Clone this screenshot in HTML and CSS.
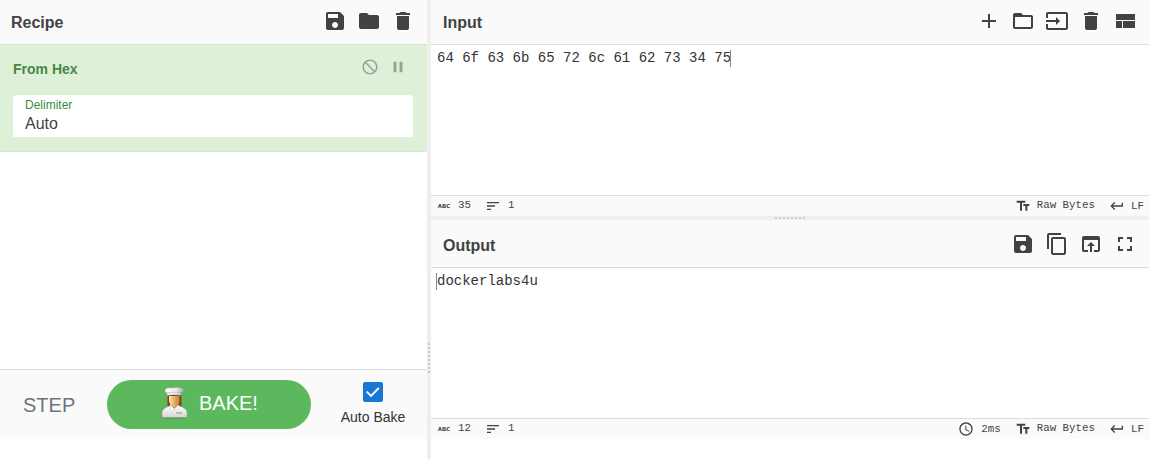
FILE: index.html
```html
<!DOCTYPE html>
<html lang="en">
<head>
<meta charset="utf-8">
<title>CyberChef</title>
<link rel="stylesheet" href="styles.css">
</head>
<body>
<svg class="defs" aria-hidden="true">
  <symbol id="save" viewBox="0 0 24 24"><path d="M17 3H5c-1.11 0-2 .9-2 2v14c0 1.1.89 2 2 2h14c1.1 0 2-.9 2-2V7l-4-4zm-5 16c-1.66 0-3-1.34-3-3s1.34-3 3-3 3 1.34 3 3-1.34 3-3 3zm3-10H5V5h10v4z"/></symbol>
  <symbol id="folder" viewBox="0 0 24 24"><path d="M10 4H4c-1.1 0-1.99.9-1.99 2L2 18c0 1.1.9 2 2 2h16c1.1 0 2-.9 2-2V8c0-1.1-.9-2-2-2h-8l-2-2z"/></symbol>
  <symbol id="folder-open" viewBox="0 0 24 24"><path d="M20 6h-8l-2-2H4c-1.1 0-1.99.9-1.99 2L2 18c0 1.1.9 2 2 2h16c1.1 0 2-.9 2-2V8c0-1.1-.9-2-2-2zm0 12H4V8h16v10z"/></symbol>
  <symbol id="delete" viewBox="0 0 24 24"><path d="M6 19c0 1.1.9 2 2 2h8c1.1 0 2-.9 2-2V7H6v12zM19 4h-3.500l-1-1h-5l-1 1H5v2h14V4z"/></symbol>
  <symbol id="add" viewBox="0 0 24 24"><path d="M19 13h-6v6h-2v-6H5v-2h6V5h2v6h6v2z"/></symbol>
  <symbol id="input" viewBox="0 0 24 24"><path d="M21 3.010H3c-1.100 0-2 .9-2 2V9h2V4.990h18v14.030H3V15H1v4.010c0 1.100.9 1.980 2 1.980h18c1.100 0 2-.88 2-1.980v-14c0-1.110-.9-2-2-2zM11 16l4-4-4-4v3H1v2h10v3z"/></symbol>
  <symbol id="layout" viewBox="0 0 24 24"><path d="M3 19h6v-7H3v7zm7 0h12v-7H10v7zM3 5v6h19V5H3z"/></symbol>
  <symbol id="copy" viewBox="0 0 24 24"><path d="M16 1H4c-1.100 0-2 .9-2 2v14h2V3h12V1zm3 4H8c-1.100 0-2 .9-2 2v14c0 1.100.9 2 2 2h11c1.100 0 2-.9 2-2V7c0-1.100-.9-2-2-2zm0 16H8V7h11v14z"/></symbol>
  <symbol id="open-browser" viewBox="0 0 24 24"><path d="M19 4H5c-1.110 0-2 .9-2 2v12c0 1.100.89 2 2 2h4v-2H5V8h14v10h-4v2h4c1.100 0 2-.9 2-2V6c0-1.100-.89-2-2-2zm-7 6l-4 4h3v6h2v-6h3l-4-4z"/></symbol>
  <symbol id="fullscreen" viewBox="0 0 24 24"><path d="M7 14H5v5h5v-2H7v-3zm-2-4h2V7h3V5H5v5zm12 7h-3v2h5v-5h-2v3zM14 5v2h3v3h2V5h-5z"/></symbol>
  <symbol id="block" viewBox="0 0 24 24"><path transform="translate(24 0) scale(-1 1)" d="M12 2C6.480 2 2 6.480 2 12s4.480 10 10 10 10-4.480 10-10S17.520 2 12 2zM4 12c0-4.420 3.580-8 8-8 1.850 0 3.550.63 4.900 1.690L5.690 16.900C4.630 15.550 4 13.850 4 12zm8 8c-1.850 0-3.550-.63-4.900-1.690L18.310 7.100C19.370 8.450 20 10.150 20 12c0 4.420-3.580 8-8 8z"/></symbol>
  <symbol id="pause" viewBox="0 0 24 24"><path d="M6 19h4V5H6v14zm8-14v14h4V5h-4z"/></symbol>
  <symbol id="sort" viewBox="0 0 24 24"><path d="M3 18h6v-2H3v2zM3 6v2h18V6H3zm0 7h12v-2H3v2z"/></symbol>
  <symbol id="text-fields" viewBox="0 0 24 24"><path d="M2.500 4v3h5v12h3V7h5V4h-13zm19 5h-9v3h3v7h3v-7h3V9z"/></symbol>
  <symbol id="return" viewBox="0 0 24 24"><path d="M19 7v4H5.830l3.580-3.590L8 6l-6 6 6 6 1.410-1.410L5.830 13H21V7z"/></symbol>
  <symbol id="clock" viewBox="0 0 24 24"><path d="M11.990 2C6.470 2 2 6.480 2 12s4.470 10 9.990 10C17.520 22 22 17.520 22 12S17.520 2 11.990 2zM12 20c-4.420 0-8-3.580-8-8s3.580-8 8-8 8 3.580 8 8-3.580 8-8 8zm.5-13H11v6l5.250 3.150.75-1.230-4.500-2.670z"/></symbol>
</svg>

<div class="workspace">
  <section class="recipe">
    <header class="title-bar">
      <h1>Recipe</h1>
      <div class="tools">
        <svg><use href="#save"/></svg><svg><use href="#folder"/></svg><svg><use href="#delete"/></svg>
      </div>
    </header>
    <div class="operation">
      <div class="op-head">
        <span class="op-title">From Hex</span>
        <div class="op-icons"><svg><use href="#block"/></svg><svg><use href="#pause"/></svg></div>
      </div>
      <div class="field">
        <span class="field-label">Delimiter</span>
        <span class="field-value">Auto</span>
      </div>
    </div>
    <div class="controls">
      <div class="step">STEP</div>
      <div class="bake">
        <svg class="chef" viewBox="0 0 32 32">
          <defs>
            <linearGradient id="skin"><stop offset="0" stop-color="#ffe6a6"/><stop offset="1" stop-color="#bd8138"/></linearGradient>
            <linearGradient id="cloth" x2="0" y2="1"><stop offset="0" stop-color="#fff"/><stop offset="1" stop-color="#d3d5d3"/></linearGradient>
            <linearGradient id="hat"><stop offset="0" stop-color="#fff"/><stop offset=".6" stop-color="#ececec"/><stop offset="1" stop-color="#aaa"/></linearGradient>
          </defs>
          <ellipse cx="16.500" cy="30.500" rx="13" ry="1" fill="#3f8e40"/>
          <path d="M9.500 8h14v10c0 3-1.500 4.500-3.500 4.500h-7C10.500 22 9.500 20 9.500 17z" fill="#854015"/>
          <path d="M4 30.500v-5c0-3 3-5 9-7l3.500 3 3.500-3c6 2 9 4 9 7v5z" fill="url(#cloth)" stroke="#929792" stroke-width=".5"/>
          <path d="M12.500 16h7.500v3l-3.500 3.500-4-3.500z" fill="#ca914a"/>
          <path d="M11 9h10.500v5c0 3-2.500 6-5 6S11 16.500 11 13.500z" fill="url(#skin)"/>
          <path d="M12.300 18l4.200 4 4-4 1.500 1.500-3.500 5-2-2-2.500 2-3-5z" fill="#fafafa" stroke="#bbb" stroke-width=".4"/>
          <path d="M7 3.500C7 .8 11 .2 14 1c3-.8 11-.8 11.500 1.500.3 1.500-1.500 2.500-2.500 3v3c-4-1-9-1-14 0V6C8 5.500 7 5 7 3.500z" fill="url(#hat)" stroke="#999" stroke-width=".4"/>
          <path d="M9 6c5-1 10-1 14-.5" fill="none" stroke="#aaa" stroke-width=".6"/>
          <path d="M18 25.500h5.500l.5 1h-5" fill="none" stroke="#999" stroke-width=".6"/>
        </svg>
        <span>BAKE!</span>
      </div>
      <div class="auto">
        <span class="check"><svg viewBox="0 0 20 20"><path d="M3.700 9.600L8 14l7.800-8" fill="none" stroke="#fff" stroke-width="1.900"/></svg></span>
        <span>Auto Bake</span>
      </div>
    </div>
  </section>
  <div class="gutter gutter-v"><i></i></div>
  <section class="io">
    <div class="pane pane-in">
      <header class="title-bar">
        <h1>Input</h1>
        <div class="tools">
          <svg><use href="#add"/></svg><svg><use href="#folder-open"/></svg><svg><use href="#input"/></svg><svg><use href="#delete"/></svg><svg><use href="#layout"/></svg>
        </div>
      </header>
      <div class="editor"><span>64 6f 63 6b 65 72 6c 61 62 73 34 75</span><i class="caret"></i></div>
      <footer class="status">
        <svg class="abc" viewBox="0 0 14 16"><text x="0.700" y="10.300" textLength="12.600" lengthAdjust="spacingAndGlyphs">ABC</text></svg><span class="chars">35</span>
        <svg class="lines"><use href="#sort"/></svg><span>1</span>
        <div class="right">
          <svg><use href="#text-fields"/></svg><span class="enc">Raw Bytes</span>
          <svg><use href="#return"/></svg><span class="eol">LF</span>
        </div>
      </footer>
    </div>
    <div class="gutter gutter-h"><i></i></div>
    <div class="pane pane-out">
      <header class="title-bar out-title">
        <h1>Output</h1>
        <div class="tools">
          <svg><use href="#save"/></svg><svg><use href="#copy"/></svg><svg><use href="#open-browser"/></svg><svg><use href="#fullscreen"/></svg>
        </div>
      </header>
      <div class="editor out"><i class="caret"></i><span>dockerlabs4u</span></div>
      <footer class="status">
        <svg class="abc" viewBox="0 0 14 16"><text x="0.700" y="10.300" textLength="12.600" lengthAdjust="spacingAndGlyphs">ABC</text></svg><span class="chars">12</span>
        <svg class="lines"><use href="#sort"/></svg><span>1</span>
        <div class="right">
          <svg><use href="#clock"/></svg><span class="time">2ms</span>
          <svg><use href="#text-fields"/></svg><span class="enc">Raw Bytes</span>
          <svg><use href="#return"/></svg><span class="eol">LF</span>
        </div>
      </footer>
    </div>
  </section>
</div>
</body>
</html>
```
FILE: styles.css
```css
* { box-sizing: border-box; }
body {
  margin: 0;
  background: #fff;
  color: #424242;
  font-family: "Liberation Sans", Arial, sans-serif;
  overflow: hidden;
}
svg { display: block; fill: currentColor; flex: none; }
.defs { display: none; }
.workspace { display: flex; height: 459px; }

.recipe { width: 427px; height: 439px; display: flex; flex-direction: column; }
.title-bar {
  height: 45px;
  flex: none;
  display: flex;
  justify-content: space-between;
  padding: 0 12px;
  background: #fafafa;
  border-bottom: 1px solid #ddd;
}
.recipe .title-bar { padding-left: 11px; }
h1 { margin: 0; font-size: 16px; line-height: 46px; height: 44px; font-weight: bold; }
.tools { display: flex; gap: 10px; padding-top: 9px; }
.tools svg { width: 24px; height: 24px; }

.operation {
  height: 107px;
  flex: none;
  padding: 14px 14px 0 13px;
  background: #dff0d8;
  border-bottom: 1px solid #d6e9c6;
}
.op-head { height: 36px; display: flex; justify-content: space-between; }
.op-title { font-size: 14px; font-weight: bold; line-height: 20px; color: #468847; }
.op-icons { display: flex; gap: 9.5px; padding-right: 6.5px; color: #9e9e9e; }
.op-icons svg { width: 18px; height: 18px; margin-top: -1px; }
.field {
  height: 43px;
  padding: 3px 12px 0;
  display: flex;
  flex-direction: column;
  background: #fff;
  border-bottom: 1px solid #e3eedf;
  border-radius: 4px 4px 0 0;
}
.field-label { font-size: 12px; line-height: 14px; color: #388e3c; }
.field-value { font-size: 16px; line-height: 24px; }

.controls {
  height: 70px;
  margin-top: auto;
  padding-top: 10px;
  display: flex;
  background: #fafafa;
  border-top: 1px solid #ddd;
}
.step { width: 107px; flex: none; padding-left: 23px; font-size: 20px; line-height: 50px; color: #6c757d; }
.bake {
  width: 204px;
  height: 49px;
  flex: none;
  display: flex;
  align-items: flex-start;
  padding: 7px 0 0 51px;
  gap: 9px;
  border-radius: 25px;
  background: #5cb85c;
  color: #fff;
  font-size: 20px;
  line-height: 33px;
}
.chef { width: 32px; height: 32px; }
.auto {
  width: 116px;
  padding: 2px 0 0 8px;
  display: flex;
  flex-direction: column;
  align-items: center;
  font-size: 14px;
  line-height: 20px;
  gap: 5px;
  color: #333;
}
.auto { margin-left: 0; padding-left: 8px; }
.check { width: 20px; height: 20px; background: #1976d2; border-radius: 2px; }

.gutter { flex: none; display: flex; align-items: center; justify-content: center; background: #eee; }
.gutter-v { width: 4px; align-items: flex-start; padding-top: 343px; }
.gutter-v i { width: 2px; height: 30px; background: repeating-linear-gradient(to bottom, #ccc 0 2px, transparent 2px 4px); }
.gutter-h { height: 4px; }
.gutter-h i { width: 30px; height: 2px; background: repeating-linear-gradient(to right, #ccc 0 2px, transparent 2px 4px); }

.io { width: 718px; height: 439px; display: flex; flex-direction: column; }
.pane { display: flex; flex-direction: column; }
.pane-in { height: 216px; }
.pane-out { height: 219px; }
.out-title { height: 48px; }
.out-title h1 { line-height: 51px; }
.out-title .tools { padding-top: 12px; }
.editor {
  flex: 1;
  display: flex;
  padding: 3px 0 0 6px;
  color: #333;
  font: 14px/20px "Liberation Mono", monospace;
}
.editor.out { padding-left: 5px; }
.caret { width: 1px; height: 17px; margin-top: 2px; margin-left: -1px; background: #888; }
.out .caret { margin-left: 0; }
.status {
  height: 21px;
  flex: none;
  display: flex;
  padding: 2px 5px 0 6px;
  background: #fafafa;
  border-top: 1px solid #ddd;
  color: #424242;
  font: 10.8px/14px "Liberation Mono", monospace;
}
.status svg { width: 16px; height: 16px; }
.status .abc { width: 14px; font: bold 5.500px "DejaVu Sans Mono", monospace; }
.chars { margin-left: 7px; }
.lines { margin-left: 14.5px; }
.lines + span { margin-left: 6.5px; }
.right { margin-left: auto; display: flex; }
.enc { margin: 0 14px 0 6px; }
.eol { margin-left: 6px; padding-top: 1px; }
.time { margin: 1px 14px 0 7px; }
```
